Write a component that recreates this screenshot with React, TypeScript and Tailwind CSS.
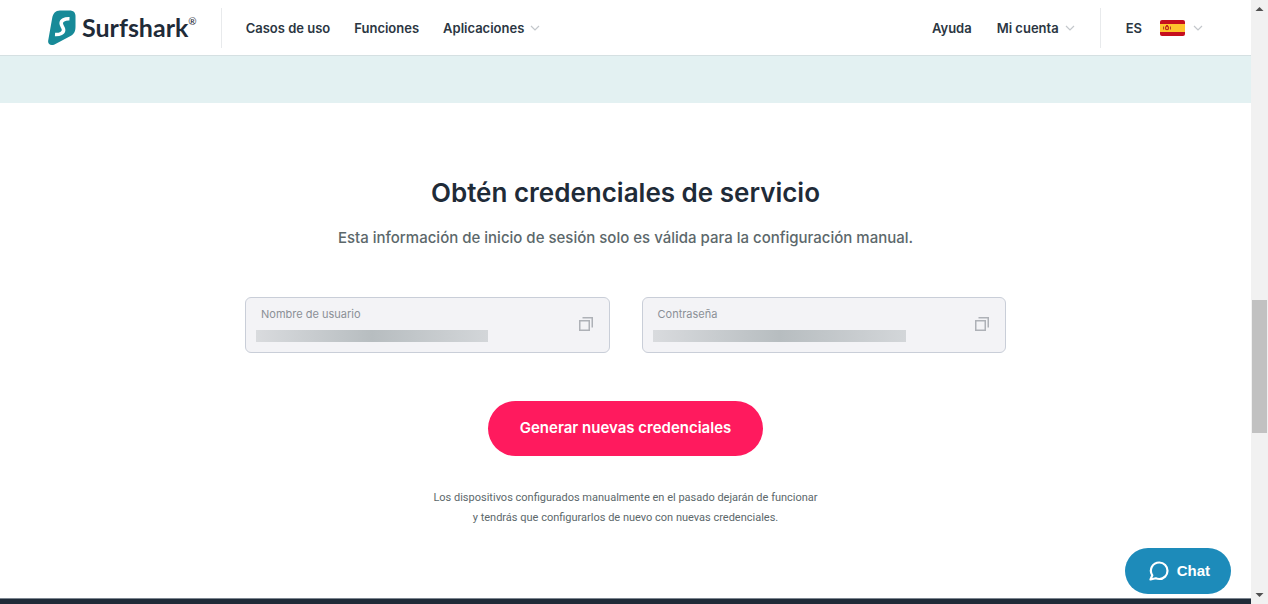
import type { ReactNode } from "react";

function Chevron() {
  return (
    <svg width="10" height="6" viewBox="0 0 10 6" fill="none" aria-hidden="true">
      <path d="M1 1l4 4 4-4" stroke="#c3c7cb" strokeWidth="1.2" />
    </svg>
  );
}

function LogoMark() {
  return (
    <svg width="28" height="36" viewBox="0 0 28 36" aria-hidden="true">
      <path
        d="M12 .5H21.500C25.500 .5 27.500 2.500 27.500 6.500V16.500C27.500 21 26.500 23.500 23 25.800L6.500 34.400C2.500 36 -.4 34 .2 30.500L4.200 8C5 3.500 7.500 .5 12 .5Z"
        fill="#178a98"
      />
      <path
        d="M21.500 8.800C16.500 8.600 13.200 10.300 13.200 13.300C13.200 16.300 15.600 17 15.600 20C15.600 23 12 24.800 7 24.500"
        fill="none"
        stroke="#fff"
        strokeWidth="3.600"
      />
    </svg>
  );
}

function SpainFlag() {
  return (
    <svg width="25" height="16" viewBox="0 0 25 16" aria-hidden="true">
      <rect width="25" height="16" rx="2" fill="#c60f1e" />
      <rect y="4" width="25" height="8" fill="#ffc42e" />
      <path d="M3.500 6.500v3M10.500 6.500v3" stroke="#b3402a" strokeWidth="1" />
      <circle cx="7" cy="8" r="1.600" fill="none" stroke="#c02a1e" strokeWidth="1.200" />
      <path d="M6 5.500h2" stroke="#c02a1e" strokeWidth="1" />
    </svg>
  );
}

function CopyIcon() {
  return (
    <svg width="14" height="14" viewBox="0 0 14 14" fill="none" aria-hidden="true">
      <path d="M.75 3.750h9.500v9.500H.75z" stroke="#aeb1b7" strokeWidth="1.500" />
      <path d="M3.500 .75h9.750v9.750" stroke="#aeb1b7" strokeWidth="1.500" />
    </svg>
  );
}

function Header() {
  return (
    <header className="flex h-14 items-center border-b border-[#d5e0e2] bg-white px-12 text-[13px] leading-5 font-semibold text-[#2b3642]">
      <a href="/" className="flex items-center gap-1.5">
        <LogoMark />
        <span className="flex items-start pb-0.5 font-[Lato,sans-serif] text-[25px] leading-8 font-bold text-[#1f2b38]">
          Surfshark
          <span className="text-[10px] leading-5 font-medium">®</span>
        </span>
      </a>
      <nav className="ml-6 flex h-10 items-center gap-6 border-l border-[#e8eaec] pl-6">
        <a href="/casos-de-uso">Casos de uso</a>
        <a href="/funciones">Funciones</a>
        <button type="button" className="flex items-center gap-1.5">
          Aplicaciones
          <Chevron />
        </button>
      </nav>
      <div className="ml-auto flex h-10 items-center gap-[25px]">
        <a href="/ayuda">Ayuda</a>
        <button type="button" className="flex items-center gap-1.5">
          Mi cuenta
          <Chevron />
        </button>
        <button
          type="button"
          className="flex h-10 items-center border-l border-[#e8eaec] pl-[25px]"
        >
          ES
          <span className="mr-2 ml-[18px]">
            <SpainFlag />
          </span>
          <Chevron />
        </button>
      </div>
    </header>
  );
}

function CredentialField({
  id,
  label,
  children,
}: {
  id: string;
  label: string;
  children: ReactNode;
}) {
  return (
    <div className="flex h-14 items-center rounded-md border border-[#c9ced8] bg-[#f3f3f6] pr-4 pb-0.5 pl-2.5">
      <div className="flex-1">
        <label
          htmlFor={id}
          className="block pl-[5px] text-[11px] leading-4 text-[#8b9096]"
        >
          {label}
        </label>
        {children}
      </div>
      <button type="button" aria-label={`Copiar ${label}`}>
        <CopyIcon />
      </button>
    </div>
  );
}

function Credentials() {
  return (
    <main className="flex flex-1 flex-col items-center px-6 pt-[70px] pb-[68px] text-center">
      <h1 className="text-[26px] leading-10 font-semibold text-[#1f2b38]">
        Obtén credenciales de servicio
      </h1>
      <p className="mt-[13px] text-[15px] leading-6 font-medium text-[#5c686b]">
        Esta información de inicio de sesión solo es válida para la configuración manual.
      </p>
      <div className="mt-[47px] grid w-full max-w-[761px] grid-cols-2 gap-8 text-left">
        <CredentialField id="username" label="Nombre de usuario">
          <input
            id="username"
            readOnly
            className="mt-2 block h-3 w-[232px] bg-linear-to-r from-[#d9dbde] via-[#b7bdc0] to-[#d3d6d9]"
          />
        </CredentialField>
        <CredentialField id="password" label="Contraseña">
          <input
            id="password"
            type="password"
            readOnly
            className="mt-2 block h-3 w-[253px] bg-linear-to-r from-[#d9dbde] via-[#b7bdc0] to-[#d3d6d9]"
          />
        </CredentialField>
      </div>
      <button
        type="button"
        className="mt-12 h-[55px] rounded-full bg-[#ff1a5e] px-8 text-[15px] font-semibold text-white"
      >
        Generar nuevas credenciales
      </button>
      <p className="mt-8 font-[Roboto,sans-serif] text-[11px] leading-5 text-[#5c686b]">
        Los dispositivos configurados manualmente en el pasado dejarán de funcionar
        <br />y tendrás que configurarlos de nuevo con nuevas credenciales.
      </p>
    </main>
  );
}

function ChatButton() {
  return (
    <button
      type="button"
      className="fixed right-[37px] bottom-2.5 flex h-[46px] items-center gap-2 rounded-full bg-[#1d8bba] pr-[21px] pl-6 font-['Liberation_Sans',sans-serif] text-[15px] font-bold text-white"
    >
      <svg width="20" height="20" viewBox="0 0 20 20" fill="none" aria-hidden="true">
        <path
          d="M1.500 18.500L3.300 14.300C-.3 8.500 3.500 1.500 10.300 1.500C15 1.500 18.500 5.200 18.500 9.700C18.500 14.500 14.800 18 10.300 18C9 18 7.800 17.800 6.800 17.300Z"
          stroke="#fff"
          strokeWidth="2.200"
          strokeLinejoin="round"
        />
      </svg>
      Chat
    </button>
  );
}

function ScrollRail() {
  return (
    <div className="sticky top-0 flex h-screen w-[17px] shrink-0 flex-col items-center bg-[#f1f1f1]" aria-hidden="true">
      <svg width="17" height="17" viewBox="0 0 17 17">
        <path d="M4.500 11L8.500 7l4 4z" fill="#505050" />
      </svg>
      <div className="flex-[283]" />
      <div className="w-[15px] flex-[133] bg-[#c1c1c1]" />
      <div className="flex-[154]" />
      <svg width="17" height="17" viewBox="0 0 17 17">
        <path d="M4.500 6L8.500 10l4-4z" fill="#505050" />
      </svg>
    </div>
  );
}

export default function App() {
  return (
    <div className="flex min-h-screen bg-white font-[Inter,sans-serif]">
      <div className="flex min-w-0 flex-1 flex-col">
        <Header />
        <div className="h-[47px] bg-[#e3f1f2]" />
        <Credentials />
        <footer className="h-1.5 border-t border-[#7c8590] bg-[#1f2b38]" />
      </div>
      <ScrollRail />
      <ChatButton />
    </div>
  );
}
